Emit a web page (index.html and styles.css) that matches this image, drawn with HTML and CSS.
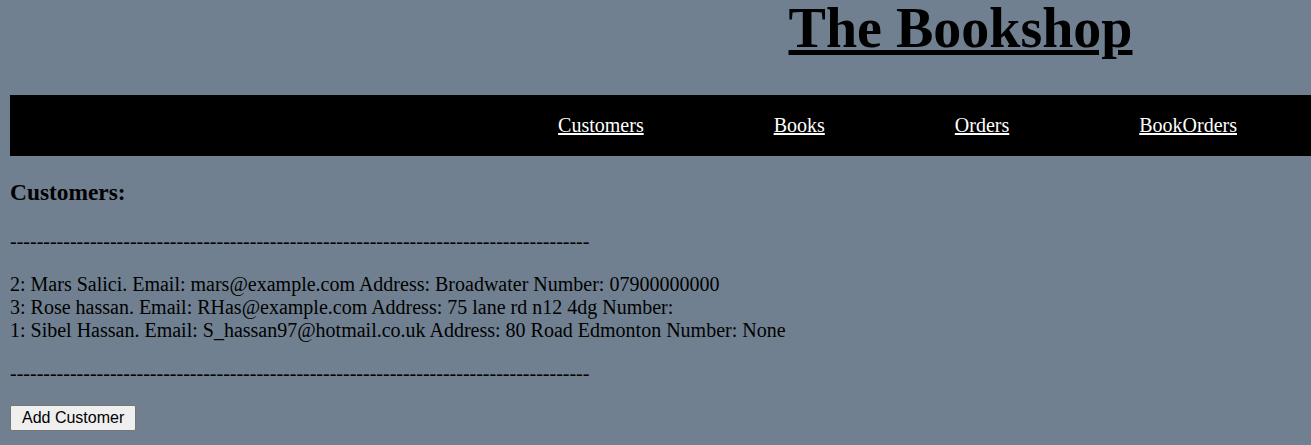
FILE: index.html
```html
<!DOCTYPE html>
<html>
<head>
<meta charset="utf-8">
<title>The Bookshop</title>
<link rel="stylesheet" href="styles.css">
</head>
<body>
<header class="site-header">
  <h1 class="site-title">The Bookshop</h1>
</header>
<nav class="main-nav">
  <a href="#" class="nav-link">Customers</a>
  <a href="#" class="nav-link">Books</a>
  <a href="#" class="nav-link">Orders</a>
  <a href="#" class="nav-link">BookOrders</a>
</nav>
<main class="content">
  <h3 class="section-title">Customers:</h3>
  <p class="divider">---------------------------------------------------------------------------------------</p>
  <p class="customer-list">
    2: Mars Salici. Email: mars@example.com Address: Broadwater Number: 07900000000<br>
    3: Rose hassan. Email: RHas@example.com Address: 75 lane rd n12 4dg Number: <br>
    1: Sibel Hassan. Email: S_hassan97@hotmail.co.uk Address: 80 Road Edmonton Number: None
  </p>
  <p class="divider">---------------------------------------------------------------------------------------</p>
  <button class="add-btn" type="button">Add Customer</button>
</main>
</body>
</html>
```

FILE: styles.css
```css
html, body {
  margin: 0;
  padding: 0;
}
body {
  background: #708090;
  font-family: "Liberation Serif", "Times New Roman", serif;
  font-size: 20px;
  color: #000;
}
.site-header {
  padding-left: 610px;
  text-align: center;
}
.site-title {
  margin: 0;
  font-size: 56px;
  line-height: 56px;
  font-weight: bold;
  text-decoration: underline;
}
.main-nav {
  margin: 39px 0 0 10px;
  height: 61px;
  background: #000;
  display: flex;
  align-items: center;
  justify-content: flex-end;
  gap: 130px;
  padding-right: 74px;
}
.nav-link {
  color: #fff;
  text-decoration: underline;
  font-size: 20px;
}
.content {
  padding-left: 10px;
}
.section-title {
  font-size: 1.17em;
  margin: 1em 0;
}
.divider,
.customer-list {
  margin: 20px 0;
}
.add-btn {
  font-family: "Liberation Sans", Arial, sans-serif;
  font-size: 16px;
  padding: 3px 11px;
  background: #efefef;
  border: 1px solid #767676;
  border-radius: 2px;
  color: #000;
}
```
